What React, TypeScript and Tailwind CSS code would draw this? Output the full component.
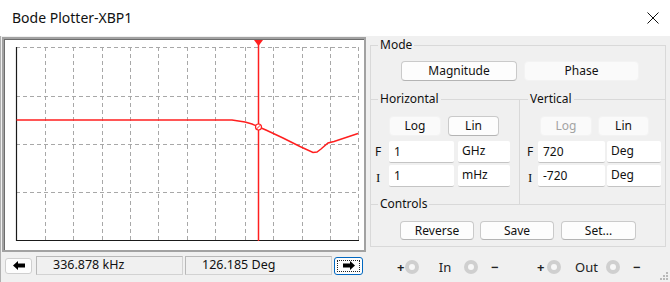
import React from "react";

const btnBordered =
  "flex items-center justify-center rounded-[4px] bg-[#fdfdfd] border border-[#cacaca] border-b-[#b4b4b4] text-[12px] leading-none text-[#111]";
const btnFlat =
  "flex items-center justify-center rounded-[4px] bg-[#fafafa] border border-[#f3f3f3] text-[12px] leading-none text-[#111]";
const inputVal =
  "h-[22px] bg-white border-b border-[#c4c4c4] rounded-[2px] text-[12px] flex items-center pl-[5px] text-[#111]";
const inputUnit =
  "h-[22px] bg-white border-b border-[#c4c4c4] rounded-[2px] text-[12px] flex items-start pt-[1px] pl-[4px] text-[#111]";
const legend =
  "-mt-[9px] w-fit px-[2px] bg-[#f0f0f0] text-[12px] leading-[16px] text-[#111]";

function Connector() {
  return (
    <div className="w-[14px] h-[14px] rounded-full bg-[#cfcfcf] flex items-center justify-center">
      <div className="w-[6px] h-[6px] rounded-full bg-[#f7f7f7]" />
    </div>
  );
}

function Plot() {
  const xs = [45, 73, 102, 130, 158, 187, 215, 245, 273, 302, 330, 358];
  const ys = [47, 96, 144, 192];
  return (
    <svg width="359" height="210" viewBox="5 40 359 210" className="block">
      {xs.map((x) => (
        <line
          key={"v" + x}
          x1={x + 0.5}
          y1={47}
          x2={x + 0.5}
          y2={240}
          stroke="#a8a8a8"
          strokeWidth="1"
          strokeDasharray="4 3"
        />
      ))}
      {ys.map((y) => (
        <line
          key={"h" + y}
          x1={16}
          y1={y + 0.5}
          x2={359}
          y2={y + 0.5}
          stroke="#a8a8a8"
          strokeWidth="1"
          strokeDasharray="4 3"
        />
      ))}
      <line x1="16.5" y1="47" x2="16.5" y2="241" stroke="#1a1a1a" strokeWidth="1.2" />
      <line x1="16" y1="240.5" x2="359" y2="240.5" stroke="#1a1a1a" strokeWidth="1.2" />
      <polyline
        points="16.5,120 232,120 245,122 252,124 259,127 267,130.5 283,138 300,146.5 313,152.5 317,152 321,149 328,143 334,141.5 358,133.5"
        fill="none"
        stroke="#ff1f1f"
        strokeWidth="1.5"
      />
      <line x1="258.5" y1="40" x2="258.5" y2="241" stroke="#ff1f1f" strokeWidth="1.5" />
      <polygon points="254,40 263,40 258.5,46" fill="#ff1f1f" />
      <circle cx="258.5" cy="127" r="3" fill="#fff" stroke="#ff1f1f" strokeWidth="1.2" />
      <line x1="256.5" y1="129" x2="260.5" y2="125" stroke="#ff1f1f" strokeWidth="1" />
    </svg>
  );
}

function ArrowLeft() {
  return (
    <svg width="12" height="9" viewBox="0 0 12 9">
      <polygon points="0,4.5 5,0 5,2.5 12,2.5 12,6.5 5,6.5 5,9" fill="#000" />
    </svg>
  );
}

function ArrowRight() {
  return (
    <svg width="12" height="9" viewBox="0 0 12 9">
      <polygon points="12,4.5 7,0 7,2.5 0,2.5 0,6.5 7,6.5 7,9" fill="#000" />
    </svg>
  );
}

export default function App() {
  return (
    <div className="relative w-[670px] h-[282px] bg-[#f0f0f0] flex flex-col overflow-hidden font-['Noto_Sans',sans-serif] text-[#111]">
      {/* Title bar */}
      <div className="h-[36px] bg-white flex items-center justify-between pl-[12px] pr-[11px] shrink-0">
        <span className="text-[14px] leading-none">Bode Plotter-XBP1</span>
        <svg width="12" height="12" viewBox="0 0 12 12">
          <line x1="0.5" y1="0.5" x2="11.5" y2="11.5" stroke="#111" strokeWidth="1" />
          <line x1="11.5" y1="0.5" x2="0.5" y2="11.5" stroke="#111" strokeWidth="1" />
        </svg>
      </div>

      {/* Body */}
      <div className="flex flex-1 border-l border-[#b0b0b0]">
        {/* Left column */}
        <div className="w-[365px] pl-[1px] pt-[1px] flex flex-col">
          <div className="w-[364px] h-[215px] border-2 border-[#a2a2a2] flex">
            <div className="flex-1 border-t border-l border-[#6d6d6d] bg-white overflow-hidden">
              <Plot />
            </div>
          </div>
          <div className="mt-[4px] h-[19px] flex items-center pl-[3px]">
            <div className="w-[27px] h-[16px] rounded-[3px] bg-[#fdfdfd] border border-[#cfcfcf] flex items-center justify-center">
              <ArrowLeft />
            </div>
            <div className="ml-[4px] w-[147px] h-[19px] border border-[#d2d2d2] border-t-[#b8b8b8] border-l-[#b8b8b8] flex items-center pl-[16px] text-[12.5px] leading-none">
              336.878 kHz
            </div>
            <div className="ml-[2px] w-[147px] h-[19px] border border-[#d2d2d2] border-t-[#b8b8b8] border-l-[#b8b8b8] flex items-center pl-[16px] text-[12.5px] leading-none">
              126.185 Deg
            </div>
            <div className="ml-[2px] w-[29px] h-[18px] rounded-[3px] bg-[#fdfdfd] border border-[#0067c0] p-[2px] flex">
              <div className="flex-1 border border-dotted border-[#222] flex items-center justify-center">
                <ArrowRight />
              </div>
            </div>
          </div>
        </div>

        {/* Right column */}
        <div className="ml-[4px] w-[296px] flex flex-col">
          <div className="mt-[9px] border border-[#d9d9d9] flex flex-col">
            {/* Mode */}
            <div className="flex flex-col">
              <div className={legend + " ml-[7px]"}>Mode</div>
              <div className="flex gap-[7px] pl-[30px] mt-[8px]">
                <div className={btnBordered + " w-[116px] h-[20px]"}>Magnitude</div>
                <div className={btnFlat + " w-[115px] h-[20px]"}>Phase</div>
              </div>
            </div>

            {/* Horizontal / Vertical */}
            <div className="mt-[18px] border-t border-[#d9d9d9] flex">
              <div className="w-[148px] flex flex-col pb-[17px]">
                <div className={legend + " ml-[7px]"}>Horizontal</div>
                <div className="flex gap-[7px] pl-[18px] mt-[9px]">
                  <div className={btnFlat + " w-[52px] h-[20px]"}>Log</div>
                  <div className={btnBordered + " w-[51px] h-[20px]"}>Lin</div>
                </div>
                <div className="flex items-center pl-[4px] mt-[5px]">
                  <span className="w-[14px] text-[12px] leading-none">F</span>
                  <div className={inputVal + " w-[65px]"}>1</div>
                  <div className={inputUnit + " w-[52px] ml-[4px]"}>GHz</div>
                </div>
                <div className="flex items-center pl-[5px] mt-[2px]">
                  <span className="w-[13px] text-[13px] leading-none pt-[3px] font-['Liberation_Serif',serif]">I</span>
                  <div className={inputVal + " w-[65px]"}>1</div>
                  <div className={inputUnit + " w-[52px] ml-[4px]"}>mHz</div>
                </div>
              </div>
              <div className="flex-1 border-l border-[#d9d9d9] flex flex-col">
                <div className={legend + " ml-[8px]"}>Vertical</div>
                <div className="flex gap-[6px] pl-[20px] mt-[9px]">
                  <div className={btnFlat + " w-[52px] h-[20px] text-[#a3a3a3]"}>Log</div>
                  <div className={btnFlat + " w-[51px] h-[20px]"}>Lin</div>
                </div>
                <div className="flex items-center pl-[7px] mt-[5px]">
                  <span className="w-[11px] text-[12px] leading-none">F</span>
                  <div className={inputVal + " w-[67px]"}>720</div>
                  <div className={inputUnit + " w-[54px] ml-[2px]"}>Deg</div>
                </div>
                <div className="flex items-center pl-[8px] mt-[2px]">
                  <span className="w-[10px] text-[13px] leading-none pt-[3px] font-['Liberation_Serif',serif]">I</span>
                  <div className={inputVal + " w-[67px]"}>-720</div>
                  <div className={inputUnit + " w-[54px] ml-[2px]"}>Deg</div>
                </div>
              </div>
            </div>

            {/* Controls */}
            <div className="border-t border-[#d9d9d9] flex flex-col pb-[6px]">
              <div className={legend + " ml-[7px]"}>Controls</div>
              <div className="flex pl-[29px] mt-[9px]">
                <div className={btnBordered + " w-[74px] h-[19px]"}>Reverse</div>
                <div className={btnBordered + " w-[74px] h-[19px] ml-[6px]"}>Save</div>
                <div className={btnBordered + " w-[75px] h-[19px] ml-[7px]"}>Set...</div>
              </div>
            </div>
          </div>

          {/* Connectors */}
          <div className="mt-[12px] h-[16px] flex items-center pl-[27px] text-[13px] leading-none text-[#222]">
            <span className="w-[8px] font-bold">+</span>
            <Connector />
            <span className="w-[45px] pl-[7px] text-center">In</span>
            <Connector />
            <span className="w-[59px] pl-[13px] font-bold">−</span>
            <span className="w-[10px] font-bold">+</span>
            <Connector />
            <span className="w-[45px] pl-[6px] text-center">Out</span>
            <Connector />
            <span className="pl-[13px] font-bold">−</span>
          </div>
        </div>
      </div>

      {/* resize grip */}
      <svg className="absolute right-[2px] bottom-[2px]" width="8" height="8" viewBox="0 0 8 8">
        <rect x="6" y="0" width="2" height="2" fill="#b8b8b8" />
        <rect x="3" y="3" width="2" height="2" fill="#b8b8b8" />
        <rect x="6" y="3" width="2" height="2" fill="#b8b8b8" />
        <rect x="0" y="6" width="2" height="2" fill="#b8b8b8" />
        <rect x="3" y="6" width="2" height="2" fill="#b8b8b8" />
        <rect x="6" y="6" width="2" height="2" fill="#b8b8b8" />
      </svg>
    </div>
  );
}
